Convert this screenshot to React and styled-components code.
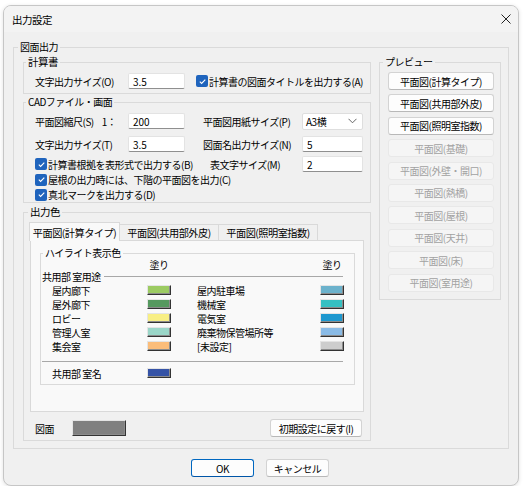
import React from "react";
import styled, { createGlobalStyle } from "styled-components";

const GlobalStyle = createGlobalStyle`
  * { box-sizing: border-box; }
  body {
    margin: 0;
    background: #fff;
    font-family: "Noto Sans CJK JP", "Noto Sans", sans-serif;
    font-size: 10px;
    letter-spacing: -0.5px;
    color: #000;
  }
`;

const Window = styled.div`
  margin: 5px 0 0 3px;
  width: 516px;
  height: 481px;
  border: 1px solid #c6c6c6;
  border-radius: 8px;
  background: #f0f0f0;
  overflow: hidden;
  display: flex;
  flex-direction: column;
  box-shadow: 0 1px 4px rgba(0, 0, 0, 0.12);
`;

const TitleBar = styled.div`
  height: 26px;
  display: flex;
  align-items: center;
  justify-content: space-between;
  padding-left: 8px;
  background: #f3f3f3;
  font-size: 10.5px;
`;

const CloseBtn = styled.div`
  width: 24px;
  height: 26px;
  display: flex;
  align-items: center;
  justify-content: center;
`;

const Body = styled.div`
  padding: 8px 9px 0 9px;
`;

const Group = styled.fieldset`
  margin: ${(p) => p.$mt || 0}px 0 0;
  padding: 0;
  border: 1px solid #dadada;
  min-inline-size: 0;
  ${(p) => (p.$w ? `width: ${p.$w}px;` : "")}
  flex: none;
`;

const Legend = styled.legend`
  margin-left: ${(p) => (p.$ml === undefined ? 2 : p.$ml)}px;
  padding: 0 2px;
  line-height: 14px;
  font-size: ${(p) => p.$fs || 10}px;
`;

const OuterContent = styled.div`
  display: flex;
  align-items: flex-start;
  gap: 8px;
  padding: 1px 7px 7px 9px;
`;

const LeftCol = styled.div`
  width: 348px;
  display: flex;
  flex-direction: column;
`;

const GroupBody = styled.div`
  padding: ${(p) => p.$pad};
`;

const Row = styled.div`
  display: flex;
  align-items: center;
  height: ${(p) => p.$h || 16}px;
  margin-top: ${(p) => p.$mt || 0}px;
`;

const Label = styled.span`
  width: ${(p) => p.$w}px;
  margin-left: ${(p) => p.$ml || 0}px;
  flex: none;
  white-space: nowrap;
  display: flex;
  gap: 8px;
`;

const TextBox = styled.div`
  width: ${(p) => p.$w}px;
  height: 16px;
  flex: none;
  background: #fff;
  border: 1px solid #e3e3e3;
  border-bottom-color: #8f8f8f;
  border-radius: 2px;
  padding: 0 4px;
  display: flex;
  align-items: center;
  letter-spacing: 0;
`;

const SelectBox = styled.div`
  width: 61px;
  height: 17px;
  flex: none;
  background: #fff;
  border: 1px solid #dedede;
  border-radius: 2px;
  padding: 0 5px 0 3px;
  display: flex;
  align-items: center;
  justify-content: space-between;
`;

const CheckItem = styled.div`
  display: flex;
  align-items: center;
  gap: 1px;
  white-space: nowrap;
  margin-left: ${(p) => p.$ml || 0}px;
  ${(p) => (p.$w ? `width: ${p.$w}px; flex: none;` : "")}
`;

const CheckBox = styled.span`
  width: 12px;
  height: 12px;
  border-radius: 2px;
  background: #1f64bd;
  display: inline-flex;
  align-items: center;
  justify-content: center;
  flex: none;
`;

const TabStrip = styled.div`
  display: flex;
  align-items: flex-end;
  height: 18px;
  margin-left: -1px;
  position: relative;
  z-index: 1;
`;

const Tab = styled.div`
  width: ${(p) => p.$w}px;
  height: ${(p) => (p.$active ? 19 : 16)}px;
  margin-bottom: ${(p) => (p.$active ? -1 : 0)}px;
  background: ${(p) => (p.$active ? "#f9f9f9" : "#f0f0f0")};
  border: 1px solid #d9d9d9;
  border-bottom: none;
  ${(p) => (p.$active ? "" : "border-left: none;")}
  display: flex;
  align-items: center;
  justify-content: center;
  white-space: nowrap;
  font-size: 10.2px;
`;

const TabPane = styled.div`
  height: 172px;
  background: #f9f9f9;
  border: 1px solid #d9d9d9;
  padding: 5px 8px 0 9px;
`;

const ColorGrid = styled.div`
  display: grid;
  grid-template-columns: 95px 50px 123px 24px;
  grid-auto-rows: ${(p) => p.$rh}px;
  align-items: center;
  padding-left: 11px;
  margin-top: ${(p) => p.$mt || 0}px;
`;

const PaintHead = styled.span`
  grid-column: ${(p) => p.$col};
  width: 24px;
  text-align: center;
  line-height: 10px;
`;

const Heading = styled.div`
  display: flex;
  align-items: center;
  height: 12px;
  padding-left: 1px;
  padding-right: 11px;
  white-space: nowrap;

  &::after {
    content: "";
    flex: 1;
    height: 1px;
    margin-left: 3px;
    background: #a8a8a8;
  }
`;

const Separator = styled.div`
  height: 1px;
  background: #a8a8a8;
  margin: 8px 11px 0 1px;
`;

const Swatch = styled.span`
  width: ${(p) => p.$w || 24}px;
  height: ${(p) => p.$h || 10}px;
  background: ${(p) => p.$c};
  border: 1px solid;
  border-color: #e4e4e4 #333 #333 #e4e4e4;
  box-shadow: inset -1px -1px 0 #8c8c8c;
  display: block;
`;

const BottomRow = styled.div`
  display: flex;
  align-items: center;
  height: 16px;
  margin-top: 8px;
  padding-left: 5px;
`;

const PushButton = styled.button`
  font: inherit;
  font-size: 10px;
  letter-spacing: inherit;
  width: ${(p) => p.$w}px;
  height: 18px;
  padding: 0;
  margin-left: ${(p) => p.$ml || 0}px;
  flex: none;
  border-radius: 3px;
  background: ${(p) => (p.disabled ? "#f5f5f5" : "#fdfdfd")};
  color: ${(p) => (p.disabled ? "#a2a2a2" : "#000")};
  border: 1px solid
    ${(p) => (p.$primary ? "#0067c0" : p.disabled ? "#e8e8e8" : "#d3d3d3")};
  border-bottom-color: ${(p) =>
    p.$primary ? "#0055a8" : p.disabled ? "#e8e8e8" : "#b8b8b8"};
  display: flex;
  align-items: center;
  justify-content: center;
  white-space: nowrap;
`;

const PreviewList = styled.div`
  display: flex;
  flex-direction: column;
  gap: 4.4px;
  padding: 3px 5px 7px 8px;
`;

const Footer = styled.div`
  display: flex;
  justify-content: center;
  gap: 12px;
  padding-top: 10px;
  padding-right: 2px;
`;

const Check = () => (
  <CheckBox>
    <svg width="9" height="9" viewBox="0 0 9 9">
      <path d="M1.8 4.7 L3.6 6.4 L7.3 2.6" fill="none" stroke="#fff" strokeWidth="1.1" />
    </svg>
  </CheckBox>
);

const leftColors = [
  ["屋内廊下", "#9ccb62"],
  ["屋外廊下", "#55995f"],
  ["ロビー", "#f8ef85"],
  ["管理人室", "#9ad6c8"],
  ["集会室", "#fbbd7a"],
];

const rightColors = [
  ["屋内駐車場", "#6cb2cc"],
  ["機械室", "#35c0c2"],
  ["電気室", "#1e98cf"],
  ["廃棄物保管場所等", "#8abbe6"],
  ["[未設定]", "#cdcdcd"],
];

const previews = [
  ["平面図(計算タイプ)", false],
  ["平面図(共用部外皮)", false],
  ["平面図(照明室指数)", false],
  ["平面図(基礎)", true],
  ["平面図(外壁・開口)", true],
  ["平面図(熱橋)", true],
  ["平面図(屋根)", true],
  ["平面図(天井)", true],
  ["平面図(床)", true],
  ["平面図(室用途)", true],
];

export default function App() {
  return (
    <>
      <GlobalStyle />
      <Window>
        <TitleBar>
          <span>出力設定</span>
          <CloseBtn>
            <svg width="10" height="10" viewBox="0 0 10 10">
              <path d="M0.5 0.5 L9.5 9.5 M9.5 0.5 L0.5 9.5" stroke="#222" strokeWidth="1" />
            </svg>
          </CloseBtn>
        </TitleBar>
        <Body>
          <Group>
            <Legend $ml={4}>図面出力</Legend>
            <OuterContent>
              <LeftCol>
                <Group>
                  <Legend $fs={10.5}>計算書</Legend>
                  <GroupBody $pad="4px 6px 4px 11px">
                    <Row>
                      <Label $w={93}>文字出力サイズ(O)</Label>
                      <TextBox $w={57}>3.5</TextBox>
                      <CheckItem $ml={11}>
                        <Check />
                        計算書の図面タイトルを出力する(A)
                      </CheckItem>
                    </Row>
                  </GroupBody>
                </Group>

                <Group $mt={1}>
                  <Legend>CADファイル・画面</Legend>
                  <GroupBody $pad="4px 6px 0 11px">
                    <Row>
                      <Label $w={93}>
                        <span>平面図縮尺(S)</span>
                        <span>1：</span>
                      </Label>
                      <TextBox $w={57}>200</TextBox>
                      <Label $w={99} $ml={18}>平面図用紙サイズ(P)</Label>
                      <SelectBox>
                        <span>A3横</span>
                        <svg width="9" height="6" viewBox="0 0 9 6">
                          <path d="M0.5 0.8 L4.5 4.8 L8.5 0.8" fill="none" stroke="#555" strokeWidth="0.9" />
                        </svg>
                      </SelectBox>
                    </Row>
                    <Row $mt={7}>
                      <Label $w={93}>文字出力サイズ(T)</Label>
                      <TextBox $w={57}>3.5</TextBox>
                      <Label $w={99} $ml={18}>図面名出力サイズ(N)</Label>
                      <TextBox $w={61}>5</TextBox>
                    </Row>
                    <Row $mt={4}>
                      <CheckItem $w={175}>
                        <Check />
                        計算書根拠を表形式で出力する(B)
                      </CheckItem>
                      <Label $w={92}>表文字サイズ(M)</Label>
                      <TextBox $w={61}>2</TextBox>
                    </Row>
                    <Row $h={15}>
                      <CheckItem>
                        <Check />
                        屋根の出力時には、下階の平面図を出力(C)
                      </CheckItem>
                    </Row>
                    <Row $h={15}>
                      <CheckItem>
                        <Check />
                        真北マークを出力する(D)
                      </CheckItem>
                    </Row>
                  </GroupBody>
                </Group>

                <Group $mt={2}>
                  <Legend $ml={4} $fs={10.5}>出力色</Legend>
                  <GroupBody $pad="3px 6px 4px 6px">
                    <TabStrip>
                      <Tab $active $w={91}>平面図(計算タイプ)</Tab>
                      <Tab $w={99}>平面図(共用部外皮)</Tab>
                      <Tab $w={99}>平面図(照明室指数)</Tab>
                    </TabStrip>
                    <TabPane>
                      <Group>
                        <Legend>ハイライト表示色</Legend>
                        <GroupBody $pad="0 0 4px 0">
                          <ColorGrid $rh={10}>
                            <PaintHead $col={2}>塗り</PaintHead>
                            <PaintHead $col={4}>塗り</PaintHead>
                          </ColorGrid>
                          <Heading>共用部 室用途</Heading>
                          <ColorGrid $rh={14} $mt={1}>
                            {leftColors.map(([name, c], i) => (
                              <React.Fragment key={name}>
                                <span>{name}</span>
                                <Swatch $c={c} />
                                <span>{rightColors[i][0]}</span>
                                <Swatch $c={rightColors[i][1]} />
                              </React.Fragment>
                            ))}
                          </ColorGrid>
                          <Separator />
                          <ColorGrid $rh={14} $mt={4}>
                            <span>共用部 室名</span>
                            <Swatch $c="#3553a6" />
                          </ColorGrid>
                        </GroupBody>
                      </Group>
                    </TabPane>
                    <BottomRow>
                      <Label $w={37}>図面</Label>
                      <Swatch $c="#808080" $w={54} $h={16} />
                      <PushButton $w={92} $ml={144}>初期設定に戻す(I)</PushButton>
                    </BottomRow>
                  </GroupBody>
                </Group>
              </LeftCol>

              <Group $w={122}>
                <Legend $ml={3}>プレビュー</Legend>
                <PreviewList>
                  {previews.map(([name, off]) => (
                    <PushButton key={name} $w={106} disabled={off}>
                      {name}
                    </PushButton>
                  ))}
                </PreviewList>
              </Group>
            </OuterContent>
          </Group>
          <Footer>
            <PushButton $w={63} $primary>OK</PushButton>
            <PushButton $w={63}>キャンセル</PushButton>
          </Footer>
        </Body>
      </Window>
    </>
  );
}
